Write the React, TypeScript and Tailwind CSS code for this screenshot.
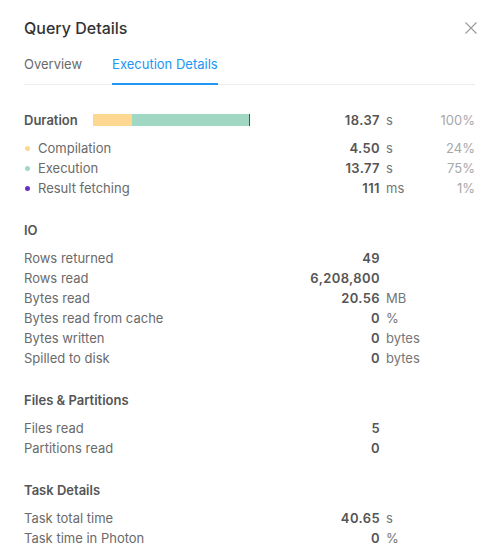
import { ReactNode } from 'react'

interface Row {
  label: string
  value: string
  unit?: string
}

const io: Row[] = [
  { label: 'Rows returned', value: '49' },
  { label: 'Rows read', value: '6,208,800' },
  { label: 'Bytes read', value: '20.56', unit: 'MB' },
  { label: 'Bytes read from cache', value: '0', unit: '%' },
  { label: 'Bytes written', value: '0', unit: 'bytes' },
  { label: 'Spilled to disk', value: '0', unit: 'bytes' },
]

const files: Row[] = [
  { label: 'Files read', value: '5' },
  { label: 'Partitions read', value: '0' },
]

const tasks: Row[] = [
  { label: 'Task total time', value: '40.65', unit: 's' },
  { label: 'Task time in Photon', value: '0', unit: '%' },
]

const phases = [
  { label: 'Compilation', value: '4.50', unit: 's', pct: '24%', dot: 'bg-[#fdd892]' },
  { label: 'Execution', value: '13.77', unit: 's', pct: '75%', dot: 'bg-[#a0d8c4]' },
  { label: 'Result fetching', value: '111', unit: 'ms', pct: '1%', dot: 'bg-[#6a2fc4]' },
]

function Line({ left, value, unit, pct }: { left: ReactNode; value: string; unit?: string; pct?: string }) {
  return (
    <div className="flex h-5 items-center">
      <div className="flex w-[356px] items-center justify-between">
        {left}
        <span className="font-semibold tracking-[0.4px] text-[#555]">{value}</span>
      </div>
      <span className="pl-[6px] text-[#757575]">{unit}</span>
      {pct && <span className="ml-auto text-[#a8a8a8]">{pct}</span>}
    </div>
  )
}

function Section({ title, rows }: { title: string; rows: Row[] }) {
  return (
    <div className="mt-[22px]">
      <div className="h-5 leading-5 font-semibold text-[#555]">{title}</div>
      <div className="mt-2">
        {rows.map((r) => (
          <Line key={r.label} left={<span>{r.label}</span>} value={r.value} unit={r.unit} />
        ))}
      </div>
    </div>
  )
}

export default function App() {
  return (
    <div
      className="h-[560px] w-[499px] overflow-hidden bg-white px-6 pt-[18px] text-[13px] leading-5 text-[#6a6a6a]"
      style={{ fontFamily: 'Inter, "Noto Sans", sans-serif' }}
    >
      {/* Header */}
      <div className="flex h-5 items-center justify-between">
        <h1 className="text-[16px] font-medium text-[#333]">Query Details</h1>
        <svg width="12" height="12" viewBox="0 0 12 12" className="mr-[-2px] text-[#9a9a9a]">
          <path d="M0.5 0.5 L11.5 11.5 M11.5 0.5 L0.5 11.5" stroke="currentColor" strokeWidth="1.1" fill="none" />
        </svg>
      </div>

      {/* Tabs */}
      <div className="mt-4 flex gap-[30px] border-b border-[#ececec] text-[13px]">
        <button className="-mb-px border-b-2 border-transparent pb-[9px] text-[#6a6a6a]">Overview</button>
        <button className="-mb-px border-b-2 border-[#2196f3] pb-[9px] text-[#2196f3]">Execution Details</button>
      </div>

      {/* Duration */}
      <div className="mt-[25px]">
        <Line
          left={
            <div className="flex items-center">
              <span className="w-[69px] font-semibold text-[#555]">Duration</span>
              <div className="flex h-3 w-[157px]">
                <div className="w-[39px] bg-[#fdd892]" />
                <div className="flex-1 bg-[#a0d8c4]" />
                <div className="w-px bg-[#6a2fc4]" />
              </div>
            </div>
          }
          value="18.37"
          unit="s"
          pct="100%"
        />
        <div className="mt-2">
          {phases.map((p) => (
            <Line
              key={p.label}
              left={
                <div className="flex items-center">
                  <span className={`ml-px mr-2 h-[5px] w-[5px] rounded-full ${p.dot}`} />
                  <span>{p.label}</span>
                </div>
              }
              value={p.value}
              unit={p.unit}
              pct={p.pct}
            />
          ))}
        </div>
      </div>

      <Section title="IO" rows={io} />
      <Section title="Files & Partitions" rows={files} />
      <Section title="Task Details" rows={tasks} />
    </div>
  )
}
